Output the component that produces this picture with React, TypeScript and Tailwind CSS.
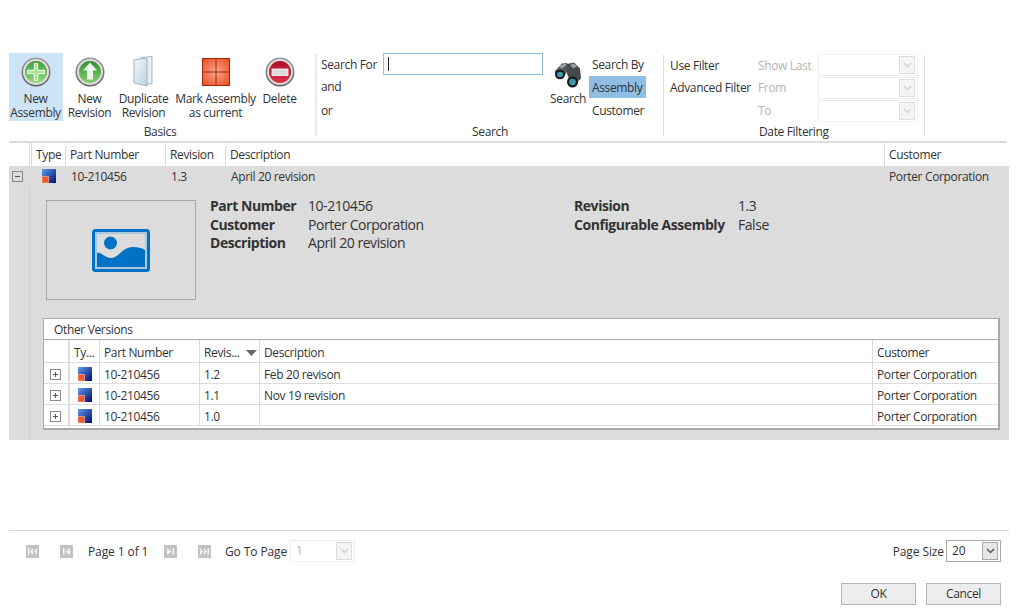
import { ReactNode } from "react";

const mainCols = "grid grid-cols-[20px_3px_34px_100px_60px_659px_124px]";
const subCols = "grid grid-cols-[24px_2px_30px_100px_60px_613px_127px]";

function RoundIcon({ id, from, to, children }: { id: string; from: string; to: string; children: ReactNode }) {
  return (
    <svg width="30" height="30" viewBox="0 0 30 30">
      <defs>
        <linearGradient id={id} x1="0" y1="0" x2="0" y2="1">
          <stop offset="0" stopColor={from} />
          <stop offset="1" stopColor={to} />
        </linearGradient>
        <linearGradient id={id + "r"} x1="0" y1="0" x2="0" y2="1">
          <stop offset="0" stopColor="#9a9a9a" />
          <stop offset="1" stopColor="#5f5f5f" />
        </linearGradient>
      </defs>
      <circle cx="15" cy="15" r="14.5" fill={`url(#${id}r)`} />
      <circle cx="15" cy="15" r="13" fill="#dedede" />
      <circle cx="15" cy="15" r="11" fill={`url(#${id})`} />
      {children}
    </svg>
  );
}

function PlusIcon() {
  return (
    <RoundIcon id="plusG" from="#3f9d3c" to="#93dc80">
      <path d="M13.300 6.500h3.400v6.800h6.800v3.400h-6.800v6.800h-3.400v-6.800H6.500v-3.400h6.800z" fill="#a8e496" stroke="#fff" strokeWidth="1" />
    </RoundIcon>
  );
}

function ArrowIcon() {
  return (
    <RoundIcon id="arrowG" from="#348f32" to="#86d070">
      <path d="M15 5.500l7 8h-4v9h-6v-9H8z" fill="#eef7e8" />
    </RoundIcon>
  );
}

function DeleteIcon() {
  return (
    <RoundIcon id="delG" from="#a9142a" to="#dc3347">
      <rect x="7" y="12" width="16" height="6.500" fill="#dcdcdc" stroke="#fff" strokeWidth="0.8" />
    </RoundIcon>
  );
}

function DuplicateIcon() {
  return (
    <svg width="26" height="32" viewBox="0 0 26 32">
      <defs>
        <linearGradient id="dupG" x1="0" y1="0" x2="1" y2="1">
          <stop offset="0" stopColor="#f4f8fb" />
          <stop offset="1" stopColor="#bcd2e2" />
        </linearGradient>
      </defs>
      <path d="M10 1.500l11-1v27l-5 1z" fill="#e8eff4" stroke="#a7b7c2" />
      <path d="M3 4l13-2v28L3 27z" fill="url(#dupG)" stroke="#a3b5c2" />
    </svg>
  );
}

function GridIcon() {
  return (
    <svg width="28" height="28" viewBox="0 0 28 28">
      <defs>
        <radialGradient id="gridG" cx="0.5" cy="0.5" r="0.75">
          <stop offset="0" stopColor="#f8a78a" />
          <stop offset="1" stopColor="#e64419" />
        </radialGradient>
      </defs>
      <rect x="0.500" y="0.500" width="27" height="27" fill="url(#gridG)" stroke="#a5260d" />
      <path d="M14 0v28M0 14h28" stroke="#a5260d" strokeWidth="1" />
    </svg>
  );
}

function BinocularsIcon() {
  return (
    <svg width="28" height="26" viewBox="0 0 28 26">
      <path d="M1 9L8 1.500 13 1l2 6-4 6-7 3-3-4z" fill="#55585b" />
      <path d="M13 2l7-1.500 6 6 1 10-5 5-6-2-3-8z" fill="#484b4e" />
      <path d="M5 4.500L10 2l3 .5-5 4z" fill="#a4a8ab" />
      <path d="M16 3l4-1.500 3 3-4 2z" fill="#9a9ea1" />
      <ellipse cx="6" cy="12.500" rx="5" ry="4.800" fill="#17191b" />
      <ellipse cx="6" cy="12.500" rx="3" ry="2.800" fill="#3d9bb0" />
      <ellipse cx="18.500" cy="20" rx="5.500" ry="5.500" fill="#17191b" />
      <ellipse cx="18.500" cy="20" rx="3.300" ry="3.300" fill="#3d9bb0" />
    </svg>
  );
}

function TypeIcon() {
  return (
    <svg width="14" height="14" viewBox="0 0 14 14" className="block">
      <defs>
        <linearGradient id="typeG" x1="0" y1="0" x2="1" y2="1">
          <stop offset="0" stopColor="#5f9bea" />
          <stop offset="1" stopColor="#020c70" />
        </linearGradient>
      </defs>
      <rect width="14" height="14" fill="url(#typeG)" />
      <rect x="0" y="7.500" width="6.500" height="6.500" fill="#ee5a2a" stroke="#f7b9a0" strokeWidth="0.6" />
    </svg>
  );
}

function Expander({ open }: { open?: boolean }) {
  return (
    <svg width="11" height="11" viewBox="0 0 11 11" className="block">
      <rect x="0.500" y="0.500" width="10" height="10" fill="none" stroke="#8a8a8a" />
      <path d={open ? "M3 5.500h5" : "M3 5.500h5M5.500 3v5"} stroke="#555" />
    </svg>
  );
}

function PictureIcon() {
  return (
    <svg width="58" height="43" viewBox="0 0 58 43" className="block">
      <rect x="1.500" y="1.500" width="55" height="40" rx="2" fill="#dcdcdc" stroke="#0072c6" strokeWidth="3" />
      <rect x="4" y="4" width="50" height="35" fill="none" stroke="#7fb5e0" strokeWidth="1" />
      <circle cx="18.500" cy="14" r="6.500" fill="#0072c6" />
      <path d="M5 24c4-2 7 5 14 5 8 0 11-11 22-11 5 0 9 1 12 3v17H5z" fill="#0072c6" />
    </svg>
  );
}

function PagerIcon({ d }: { d: string }) {
  return (
    <svg width="13" height="13" viewBox="0 0 13 13" className="block">
      <rect width="13" height="13" fill="#c3c3c3" />
      <path d={d} fill="#f2f2f2" />
    </svg>
  );
}

function Chevron({ color }: { color: string }) {
  return (
    <svg width="9" height="6" viewBox="0 0 9 6" className="block">
      <path d="M1 1l3.500 3.500L8 1" fill="none" stroke={color} strokeWidth="1.500" />
    </svg>
  );
}

function Combo({ value, width, enabled }: { value?: string; width: string; enabled?: boolean }) {
  return (
    <div
      className={`${width} h-[22px] flex items-center justify-between pl-[5px] pr-[2px] border ${
        enabled ? "border-[#a9a9a9] text-[#333]" : "border-[#efefef] text-[#b5b5b5]"
      }`}
    >
      <span>{value}</span>
      <div
        className={`w-[16px] h-[18px] flex items-center justify-center border ${
          enabled ? "border-[#a9a9a9] bg-[#e6e6e6]" : "border-[#dedede] bg-[#f4f4f4]"
        }`}
      >
        <Chevron color={enabled ? "#555" : "#d4d4d4"} />
      </div>
    </div>
  );
}

function RibbonButton({ icon, lines, width, active }: { icon: ReactNode; lines: string[]; width: string; active?: boolean }) {
  return (
    <div className={`${width} h-[68px] shrink-0 flex flex-col items-center pr-[1px] ${active ? "bg-[#cde4f7]" : ""}`}>
      <div className="h-[38px] flex items-center justify-center">{icon}</div>
      <div className="text-center leading-[14px] whitespace-nowrap mt-[1px]">
        {lines.map((l) => (
          <div key={l}>{l}</div>
        ))}
      </div>
    </div>
  );
}

function HeaderCell({ children, className = "" }: { children?: ReactNode; className?: string }) {
  return <div className={`flex items-center pl-[4px] border-r border-[#dcdcdc] whitespace-nowrap ${className}`}>{children}</div>;
}

function SubRow({ rev, desc }: { rev: string; desc: string }) {
  const cell = "flex items-center pl-[4px] pt-[3px] border-r border-[#dcdcdc]";
  return (
    <div className={`${subCols} h-[21px] border-b border-[#dcdcdc]`}>
      <div className="flex items-center justify-center pr-[1px] pt-[1px]">
        <Expander />
      </div>
      <div className="border-x border-[#dcdcdc]" />
      <div className="flex items-center justify-center border-r border-[#dcdcdc] pt-[1px]">
        <TypeIcon />
      </div>
      <div className={cell}>10-210456</div>
      <div className={cell}>{rev}</div>
      <div className={cell}>{desc}</div>
      <div className="flex items-center pl-[4px] pt-[3px]">Porter Corporation</div>
    </div>
  );
}

export default function App() {
  return (
    <div
      className="w-[1016px] h-[616px] overflow-hidden bg-white text-[#333] text-[12px] px-[9px] pt-[53px] flex flex-col"
      style={{ fontFamily: '"Open Sans", "Noto Sans", sans-serif', letterSpacing: "-0.35px" }}
    >
      {/* ribbon */}
      <div className="h-[88px] flex shrink-0">
        <div className="w-[306px] flex flex-col items-stretch">
          <div className="flex">
            <RibbonButton icon={<PlusIcon />} lines={["New", "Assembly"]} width="w-[54px]" active />
            <RibbonButton icon={<ArrowIcon />} lines={["New", "Revision"]} width="w-[54px]" />
            <RibbonButton icon={<DuplicateIcon />} lines={["Duplicate", "Revision"]} width="w-[54px]" />
            <RibbonButton icon={<GridIcon />} lines={["Mark Assembly", "as current"]} width="w-[90px]" />
            <RibbonButton icon={<DeleteIcon />} lines={["Delete"]} width="w-[38px]" />
          </div>
          <div className="text-center leading-[14px] mt-[4px] pr-[4px]">Basics</div>
        </div>

        <div className="w-[348px] h-[81px] mt-[2px] border-l-2 border-[#e8e8e8] pl-[4px] flex flex-col">
          <div className="flex h-[68px] -mt-[2px]">
            <div className="w-[62px] shrink-0 flex flex-col pt-[1px]">
              <div className="h-[23px] flex items-center">Search For</div>
              <div className="h-[24px] flex items-center">and</div>
              <div className="h-[23px] pt-[2px] flex items-center">or</div>
            </div>
            <div className="w-[160px] h-[22px] shrink-0 border border-[#8fbde0] flex items-center pl-[4px]">
              <div className="w-px h-[14px] bg-[#222]" />
            </div>
            <div className="w-[46px] shrink-0 flex flex-col items-center">
              <div className="h-[37px] flex items-center justify-center pl-[4px] pt-[7px]">
                <BinocularsIcon />
              </div>
              <div className="leading-[14px] pl-[4px] mt-[2px]">Search</div>
            </div>
            <div className="w-[57px] shrink-0 flex flex-col">
              <div className="h-[23px] pl-[3px] pt-[1px] flex items-center">Search By</div>
              <div className="h-[22px] pl-[3px] pt-[1px] flex items-center bg-[#8fbde3]">Assembly</div>
              <div className="h-[23px] pl-[3px] pt-[2px] flex items-center">Customer</div>
            </div>
          </div>
          <div className="text-center leading-[14px] mt-[4px] pr-[4px]">Search</div>
        </div>

        <div className="w-[262px] h-[81px] mt-[2px] border-l border-r border-[#dedede] pl-[6px] flex flex-col">
          <div className="flex h-[68px] -mt-[1px]">
            <div className="w-[88px] shrink-0 flex flex-col">
              <div className="h-[23px] flex items-center">Use Filter</div>
              <div className="h-[22px] flex items-center whitespace-nowrap">Advanced Filter</div>
            </div>
            <div className="w-[60px] shrink-0 flex flex-col text-[#b5b5b5] pt-[1px]">
              <div className="h-[23px] flex items-center">Show Last</div>
              <div className="h-[23px] flex items-center">From</div>
              <div className="h-[23px] flex items-center">To</div>
            </div>
            <div className="flex flex-col gap-[1px]">
              <Combo width="w-[100px]" />
              <Combo width="w-[100px]" />
              <Combo width="w-[100px]" />
            </div>
          </div>
          <div className="leading-[14px] mt-[3px] pl-[89px]">Date Filtering</div>
        </div>
      </div>

      {/* main grid */}
      <div className="h-[2px] bg-[#dcdcdc] shrink-0" />
      <div className={`${mainCols} w-[1000px] h-[23px] shrink-0`}>
        <div />
        <div className="border-x border-[#dcdcdc]" />
        <HeaderCell>Type</HeaderCell>
        <HeaderCell>Part Number</HeaderCell>
        <HeaderCell>Revision</HeaderCell>
        <HeaderCell>Description</HeaderCell>
        <HeaderCell className="border-r-0">Customer</HeaderCell>
      </div>
      <div className={`${mainCols} w-[1000px] h-[20px] bg-[#dcdcdc] shrink-0`}>
        <div className="flex items-center justify-center pr-[3px]">
          <Expander open />
        </div>
        <div />
        <div className="flex items-center justify-center">
          <TypeIcon />
        </div>
        <div className="flex items-center pl-[5px] pt-[2px]">10-210456</div>
        <div className="flex items-center pl-[5px] pt-[2px]">1.3</div>
        <div className="flex items-center pl-[5px] pt-[2px]">April 20 revision</div>
        <div className="flex items-center pl-[4px] pt-[2px]">Porter Corporation</div>
      </div>

      {/* expanded detail */}
      <div className="w-[1000px] h-[254px] bg-[#dcdcdc] shrink-0 flex">
        <div className="w-[21px] shrink-0 border-r border-[#d2d2d2]" />
        <div className="grow flex flex-col pl-[13px] pr-[9px]">
          <div className="flex pt-[14px] pl-[3px] h-[132px] shrink-0">
            <div className="w-[150px] h-[100px] shrink-0 border border-[#a9a9a9] flex items-center justify-center">
              <PictureIcon />
            </div>
            <div className="ml-[14px] text-[14px] leading-[19px] tracking-[-0.45px] grid grid-cols-[98px_266px_164px_auto] grid-rows-[19px_18px_19px] content-start -mt-[4px]">
              <b className="font-bold">Part Number</b>
              <span>10-210456</span>
              <b className="font-bold">Revision</b>
              <span>1.3</span>
              <b className="font-bold">Customer</b>
              <span>Porter Corporation</span>
              <b className="font-bold whitespace-nowrap">Configurable Assembly</b>
              <span>False</span>
              <b className="font-bold">Description</b>
              <span>April 20 revision</span>
            </div>
          </div>
          <div className="w-[957px] h-[112px] border-2 border-[#a9a9a9] border-t border-l bg-white">
            <div className="h-[21px] pl-[10px] pt-[2px] flex items-center border-b border-[#a9a9a9]">Other Versions</div>
            <div className={`${subCols} h-[23px] border-b border-[#dcdcdc]`}>
              <div />
              <div className="border-x border-[#dcdcdc]" />
              <HeaderCell className="pt-[4px]">Ty...</HeaderCell>
              <HeaderCell className="pt-[4px]">Part Number</HeaderCell>
              <HeaderCell className="pt-[4px]">
                Revis...
                <svg width="11" height="6" viewBox="0 0 11 6" className="ml-[6px]">
                  <path d="M0 0h11L5.500 6z" fill="#666" />
                </svg>
              </HeaderCell>
              <HeaderCell className="pt-[4px]">Description</HeaderCell>
              <HeaderCell className="border-r-0 pt-[4px]">Customer</HeaderCell>
            </div>
            <SubRow rev="1.2" desc="Feb 20 revison" />
            <SubRow rev="1.1" desc="Nov 19 revision" />
            <SubRow rev="1.0" desc="" />
          </div>
        </div>
      </div>

      {/* pager */}
      <div className="w-[1000px] h-px bg-[#d9d9d9] mt-[90px] shrink-0" />
      <div className="w-[1000px] h-[22px] mt-[9px] shrink-0 flex items-center pl-[17px] pr-[8px] tracking-[-0.1px]">
        <PagerIcon d="M2 3h1.500v7H2zM7 3v7L3.800 6.500zM11 3v7L7.800 6.500z" />
        <div className="w-[21px]" />
        <PagerIcon d="M3 3h1.500v7H3zM10 3v7L5.500 6.500z" />
        <span className="ml-[15px] w-[76px] pt-[2px]">Page 1 of 1</span>
        <PagerIcon d="M8.500 3H10v7H8.500zM3 3v7l4.500-3.500z" />
        <div className="w-[21px]" />
        <PagerIcon d="M9.500 3H11v7H9.500zM2 3v7l3.200-3.500zM6 3v7l3.200-3.500z" />
        <span className="ml-[14px] w-[65px] pt-[2px]">Go To Page</span>
        <Combo value="1" width="w-[65px]" />
        <span className="ml-auto mr-[2px] pt-[2px]">Page Size</span>
        <Combo value="20" width="w-[55px]" enabled />
      </div>

      {/* dialog buttons */}
      <div className="w-[992px] flex justify-end gap-[10px] mt-[21px] shrink-0">
        <button className="w-[75px] h-[22px] border border-[#b5b5b5] bg-[#ededed] leading-none">OK</button>
        <button className="w-[75px] h-[22px] border border-[#b5b5b5] bg-[#ededed] leading-none">Cancel</button>
      </div>
    </div>
  );
}
